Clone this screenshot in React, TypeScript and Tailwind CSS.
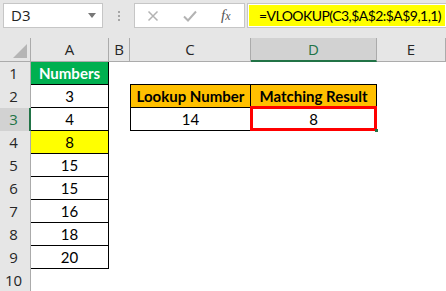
import React from 'react';

const headerCols = [
  { key: 'A', active: false },
  { key: 'B', active: false },
  { key: 'C', active: false },
  { key: 'D', active: true },
  { key: 'E', active: false },
];

const colA: Record<number, string> = {
  2: '3',
  3: '4',
  4: '8',
  5: '15',
  6: '15',
  7: '16',
  8: '18',
  9: '20',
};

const cell = 'flex items-center justify-center text-[15px] leading-none';

const FormulaBar = () => (
  <div className="h-[38px] bg-[#e6e6e6] flex items-start pt-[3px] pl-[3px]">
    <div className="w-[100px] h-[25px] bg-white border border-[#c6c6c6] flex items-center justify-between pl-[7px] pr-[6px]">
      <span className="text-[15px] font-['Open_Sans',sans-serif] text-[#222]">D3</span>
      <span className="w-0 h-0 border-l-[4px] border-r-[4px] border-t-[5px] border-l-transparent border-r-transparent border-t-[#777]" />
    </div>
    <div className="w-[31px] h-[25px] flex flex-col items-center justify-center gap-[2px]">
      <span className="w-[2px] h-[2px] bg-[#a6a6a6]" />
      <span className="w-[2px] h-[2px] bg-[#a6a6a6]" />
      <span className="w-[2px] h-[2px] bg-[#a6a6a6]" />
    </div>
    <div className="w-[111px] h-[25px] bg-white border border-[#c6c6c6] flex items-center pl-[12px] gap-[24px]">
      <svg width="12" height="12" viewBox="0 0 12 12">
        <path d="M1.5 1.5 L10.5 10.5 M10.5 1.5 L1.5 10.5" stroke="#b3b3b3" strokeWidth="1.5" fill="none" />
      </svg>
      <svg width="14" height="12" viewBox="0 0 14 12">
        <path d="M1 6.5 L5 10.5 L13 1.5" stroke="#b3b3b3" strokeWidth="2" fill="none" />
      </svg>
      <span className="font-['Liberation_Serif',serif] italic text-[15px] text-[#555] leading-none">
        f<span className="text-[12px]">x</span>
      </span>
    </div>
    <div className="ml-[2px] flex-1 h-[25px] bg-white border border-[#c6c6c6] border-r-0 p-[1px]">
      <div className="h-full bg-[#ffff00] flex items-center pl-[10px] text-[14px] font-['Lato',sans-serif] text-black tracking-[-0.55px]">
        =VLOOKUP(C3,$A$2:$A$9,1,1)
      </div>
    </div>
  </div>
);

export default function App() {
  const rows = Array.from({ length: 10 }, (_, i) => i + 1);
  return (
    <div className="w-[446px] h-[291px] overflow-hidden bg-white font-['Lato',sans-serif] text-black">
      <FormulaBar />
      <div className="grid grid-cols-[31px_78px_21px_121px_126px_1fr] grid-rows-[24px_repeat(10,23px)]">
        {/* corner */}
        <div className="bg-[#e6e6e6] border-r border-b border-[#ababab] flex items-end justify-end pr-[3px] pb-[3px]">
          <svg width="14" height="14" viewBox="0 0 14 14">
            <path d="M14 0 L14 14 L0 14 Z" fill="#b5b5b5" />
          </svg>
        </div>
        {headerCols.map((c) =>
          c.active ? (
            <div
              key={c.key}
              className="bg-[#d2d2d2] border-r border-[#ababab] border-b-2 border-b-[#217346] flex items-center justify-center text-[15px] font-['Open_Sans',sans-serif] text-[#217346]"
            >
              {c.key}
            </div>
          ) : (
            <div
              key={c.key}
              className="bg-[#e6e6e6] border-r border-b border-[#ababab] flex items-center justify-center text-[15px] font-['Open_Sans',sans-serif] text-[#262626]"
            >
              {c.key}
            </div>
          )
        )}

        {rows.map((r) => (
          <React.Fragment key={r}>
            {r === 3 ? (
              <div className="bg-[#d2d2d2] border-r-2 border-[#217346] flex items-center justify-center pr-[2px] text-[15px] font-['Open_Sans',sans-serif] text-[#217346]">
                {r}
              </div>
            ) : (
              <div className="bg-[#e6e6e6] border-r border-[#ababab] flex items-center justify-center pr-[3px] text-[15px] font-['Open_Sans',sans-serif] text-[#262626]">
                {r}
              </div>
            )}

            {/* column A */}
            {r === 1 && (
              <div className={`${cell} bg-[#00b050] text-white font-bold border-r border-b border-black`}>Numbers</div>
            )}
            {r >= 2 && r <= 9 && (
              <div className={`${cell} border-r border-b border-black ${r === 4 ? 'bg-[#ffff00]' : ''}`}>{colA[r]}</div>
            )}
            {r === 10 && <div />}

            {/* column B */}
            <div />

            {/* columns C, D */}
            {r === 1 && (
              <>
                <div className="border-b border-black" />
                <div className="border-b border-black" />
              </>
            )}
            {r === 2 && (
              <>
                <div className={`${cell} bg-[#ffc000] font-bold border-l border-r border-b border-black`}>Lookup Number</div>
                <div className={`${cell} bg-[#ffc000] font-bold border-r border-b border-black`}>Matching Result</div>
              </>
            )}
            {r === 3 && (
              <>
                <div className={`${cell} border-l border-r border-b border-black`}>14</div>
                <div className={`${cell} relative border-r border-b border-black`}>
                  8
                  <div className="absolute -left-px -right-px -top-[2px] -bottom-px border-[3px] border-[#ff0000]" />
                  <div className="absolute -right-[2px] -bottom-[2px] w-[3px] h-[3px] bg-[#217346]" />
                </div>
              </>
            )}
            {r >= 4 && (
              <>
                <div />
                <div />
              </>
            )}

            {/* column E */}
            <div />
          </React.Fragment>
        ))}
      </div>
    </div>
  );
}
